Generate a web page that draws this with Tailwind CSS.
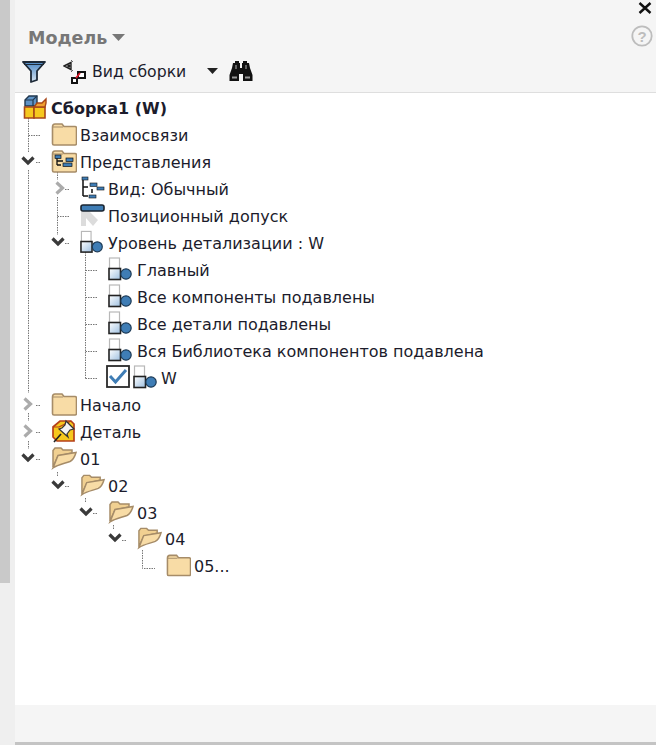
<!DOCTYPE html>
<html lang="ru">
<head>
<meta charset="UTF-8">
<title>Модель</title>
<script src="https://cdn.jsdelivr.net/npm/@tailwindcss/browser@4"></script>
</head>
<body class="bg-[#efefef] font-['DejaVu_Sans','Noto_Sans',sans-serif] text-[16px] text-[#1c1c2c]">

<!-- icon symbols -->
<svg class="absolute w-0 h-0">
  <defs>
    <linearGradient id="lod" x1="0" y1="0" x2="1" y2="1"><stop offset="0" stop-color="#ffffff"/><stop offset="1" stop-color="#9dbfe0"/></linearGradient>
    <linearGradient id="fun" x1="0" y1="0" x2="0" y2="1"><stop offset="0" stop-color="#4d88c4"/><stop offset="1" stop-color="#d5e4f2"/></linearGradient>
    <symbol id="folder" viewBox="0 0 26 24">
      <path d="M1.5 5V21.5Q1.5 23 3 23H24Q25.5 23 25.5 21.5V6Q25.5 4.5 24 4.5H13L11 2H4Q1.5 2 1.5 5Z" fill="#f8dca6" stroke="#a68c68" stroke-width="1.6"/>
      <path d="M2 5H12" stroke="#a68c68" stroke-width="1"/>
    </symbol>
    <symbol id="folder-open" viewBox="0 0 26 24">
      <path d="M2 21V4.5L4 2H10L12 4H21V7L7 10Z" fill="#f1d091" stroke="#a68c68" stroke-width="1.5"/>
      <path d="M2 22L7 9.5L25 6.5C24 10 22 14 19 15.5C14 17.5 7 18.5 2 22Z" fill="#f8dca6" stroke="#a68c68" stroke-width="1.5"/>
    </symbol>
    <symbol id="lod-icon" viewBox="0 0 26 24">
      <rect x="1.5" y="1" width="10" height="11" fill="#fff" stroke="#b8b8b8" stroke-width="1.2"/>
      <rect x="1" y="11.5" width="11.5" height="11" fill="url(#lod)" stroke="#222" stroke-width="1.6"/>
      <circle cx="18" cy="17" r="5.2" fill="#3f7db5" stroke="#1d3a55" stroke-width="1.2"/>
    </symbol>
    <symbol id="chev-down" viewBox="0 0 14 10">
      <path d="M1.5 1.5L7 7L12.5 1.5" fill="none" stroke="#3a3a3a" stroke-width="3.2"/>
    </symbol>
    <symbol id="chev-right" viewBox="0 0 10 14">
      <path d="M1.5 1.5L7.5 7L1.5 12.5" fill="none" stroke="#ababab" stroke-width="3.2"/>
    </symbol>
  </defs>
</svg>

<div class="flex h-[745px]">
  <!-- left strip -->
  <div class="w-[15px] shrink-0">
    <div class="w-[10px] h-[583px] bg-[#c9c9c9]"></div>
  </div>

  <div class="flex-1 flex flex-col bg-[#f5f5f5]">
    <!-- panel head -->
    <div class="relative h-[93px] shrink-0 border-b border-[#dedede]">
      <svg class="absolute right-[4px] top-[2px] w-[14px] h-[12px]" viewBox="0 0 14 12"><path d="M1.5 1L12.5 11M12.5 1L1.5 11" stroke="#111" stroke-width="2.4"/></svg>
      <div class="flex justify-between pt-[23px] pl-[13px] pr-[3px] h-[57px]">
        <div class="flex items-center h-[28px] gap-[5px]">
          <span class="text-[17.5px] font-bold text-[#777777] pt-[2px]">Модель</span>
          <svg class="w-[13px] h-[7px]" viewBox="0 0 13 7"><path d="M0 0H13L6.5 7Z" fill="#777777"/></svg>
        </div>
        <svg class="w-[22px] h-[22px] mt-[2px]" viewBox="0 0 22 22">
          <circle cx="11" cy="11" r="9.7" fill="none" stroke="#bdbdbd" stroke-width="1.8"/>
          <text x="11" y="16.5" text-anchor="middle" font-size="15" font-weight="700" fill="#bdbdbd" font-family="Liberation Sans">?</text>
        </svg>
      </div>
      <div class="flex items-center h-[28px] pl-[7px]">
        <svg class="w-[24px] h-[23px]" viewBox="0 0 24 23">
          <path d="M1 2H23L15 11V20L9 22V11Z" fill="url(#fun)" stroke="#1e2a38" stroke-width="1.8" stroke-linejoin="round"/>
          <path d="M2 4.5H22" stroke="#1e2a38" stroke-width="1"/>
        </svg>
        <svg class="w-[24px] h-[25px] ml-[17px]" viewBox="0 0 24 25">
          <path d="M1 7L8 3.5V10.5Z" fill="none" stroke="#222" stroke-width="1.4"/>
          <circle cx="6" cy="7" r="1.8" fill="#222"/>
          <path d="M8 1L10 3M8 13L10 11" stroke="#666" stroke-width="1"/>
          <rect x="15" y="13" width="7" height="6" fill="#fff" stroke="#111" stroke-width="2"/>
          <rect x="9" y="19" width="5" height="5" fill="#fff" stroke="#111" stroke-width="2"/>
          <path d="M13 19L17 14" stroke="#e0182a" stroke-width="1.8"/>
        </svg>
        <span class="ml-[5px] text-[15.7px] pt-[2px]">Вид сборки</span>
        <svg class="w-[11px] h-[6px] ml-[21px]" viewBox="0 0 11 6"><path d="M0 0H11L5.5 6Z" fill="#222"/></svg>
        <svg class="w-[24px] h-[22px] ml-[11px]" viewBox="0 0 24 22">
          <path d="M4 3H6V1H10V3H11V8H13V3H14V1H18V3H20L21 8L23.5 15V21H14V14H10V21H.5V15L3 8Z" fill="#111"/>
          <path d="M7 5V9M17 5V9" stroke="#999" stroke-width="1.2"/>
          <path d="M3 17.5H8M16 17.5H21" stroke="#999" stroke-width="2"/>
        </svg>
      </div>
    </div>

    <!-- tree -->
    <div class="relative h-[612px] bg-white pt-[1px]">
      <!-- dotted guide lines, coordinates are relative to the tree box (15,93) -->
      <svg class="absolute left-0 top-0 w-[300px] h-[500px]" viewBox="15 93 300 500" fill="none" stroke="#777777" stroke-width="1" stroke-dasharray="1.5 1">
        <path d="M28.5 118V152M28.5 135.5H41M36 162.5H41M28.5 170V393M36 405.5H41M28.5 413V421M36 432.5H41M28.5 441V449M36 459.5H41"/>
        <path d="M57.5 172V180M65 189.5H70M57.5 197V235M57.5 216.5H70M65 243.5H70"/>
        <path d="M85.5 252V378.5M85.5 270.5H98M85.5 297.5H98M85.5 324.5H98M85.5 351.5H98M85.5 378.5H98"/>
        <path d="M57.5 472V477M65 486.5H70M85.5 498V503M93 513.5H98M113.5 525V530M122 540.5H127M142.5 550V568.5H155"/>
      </svg>

      <div class="relative">
        <!-- root -->
        <div class="flex items-center h-[26.95px] pl-[8px]">
          <svg class="w-[25px] h-[24px]" viewBox="0 0 25 24">
            <path d="M2 5L6 1H14V11H2Z" fill="#5f93c6" stroke="#22384f" stroke-width="1.4"/>
            <path d="M2 5H10L14 1M10 5V11" fill="none" stroke="#22384f" stroke-width="1.2"/>
            <path d="M1.5 12H11V23H1.5Z" fill="#f6c81e" stroke="#a8471a" stroke-width="1.6"/>
            <path d="M11 12H22V23H11Z" fill="#f6c81e" stroke="#a8471a" stroke-width="1.6"/>
            <path d="M14 8H19L23 4V8L22 12H11Z" fill="#f0a030" stroke="#a8471a" stroke-width="1.4"/>
          </svg>
          <span class="ml-[3px] pt-[4px] font-bold">Сборка1 (W)</span>
        </div>
        <div class="flex items-center h-[26.95px]">
          <div class="w-[36px]"></div>
          <svg class="w-[26px] h-[24px]"><use href="#folder"/></svg>
          <span class="ml-[3px] pt-[4px]">Взаимосвязи</span>
        </div>
        <div class="flex items-center h-[26.95px]">
          <div class="w-[36px] flex justify-end pr-[16px]"><svg class="w-[14px] h-[10px]"><use href="#chev-down"/></svg></div>
          <svg class="w-[26px] h-[24px]" viewBox="0 0 26 24">
            <use href="#folder" width="26" height="24"/>
            <path d="M6 8V16M6 12H12M6 16H10" stroke="#111" stroke-width="1.3" fill="none"/>
            <rect x="4" y="6" width="6" height="3.5" fill="#3f7db5" stroke="#111" stroke-width=".7"/>
            <rect x="12" y="14" width="9" height="3.5" fill="#3f7db5" stroke="#111" stroke-width=".7"/>
            <rect x="15" y="9" width="7" height="3.5" fill="#3f7db5" stroke="#111" stroke-width=".7"/>
          </svg>
          <span class="ml-[3px] pt-[4px]">Представления</span>
        </div>
        <div class="flex items-center h-[26.95px]">
          <div class="w-[65px] flex justify-end pr-[15px]"><svg class="w-[10px] h-[14px]"><use href="#chev-right"/></svg></div>
          <svg class="w-[25px] h-[24px]" viewBox="0 0 25 24">
            <path d="M3 3V20M3 3H8M3 11H8M3 20H8M12 13V17" fill="none" stroke="#111" stroke-width="1.5"/>
            <rect x="2" y="1" width="6" height="3" fill="#3f7db5" stroke="#111" stroke-width=".6"/>
            <rect x="10" y="7" width="7" height="3.5" fill="#3f7db5" stroke="#111" stroke-width=".6"/>
            <rect x="17" y="11" width="7" height="3" fill="#3f7db5" stroke="#111" stroke-width=".6"/>
            <rect x="9" y="19" width="7" height="3" fill="#3f7db5" stroke="#111" stroke-width=".6"/>
          </svg>
          <span class="ml-[3px] pt-[4px]">Вид: Обычный</span>
        </div>
        <div class="flex items-center h-[26.95px]">
          <div class="w-[65px]"></div>
          <svg class="w-[25px] h-[24px]" viewBox="0 0 25 24">
            <path d="M1 8H9L18 17L13 23L6 15V23H1Z" fill="#dcdcdc"/>
            <rect x="1" y="2" width="23" height="6" rx="2" fill="#3f7db5" stroke="#1a2430" stroke-width="1.6"/>
          </svg>
          <span class="ml-[3px] pt-[4px]">Позиционный допуск</span>
        </div>
        <div class="flex items-center h-[26.95px]">
          <div class="w-[65px] flex justify-end pr-[15px]"><svg class="w-[14px] h-[10px]"><use href="#chev-down"/></svg></div>
          <svg class="w-[25px] h-[24px]"><use href="#lod-icon"/></svg>
          <span class="ml-[3px] pt-[4px]">Уровень детализации : W</span>
        </div>
        <div class="flex items-center h-[26.95px]">
          <div class="w-[93px]"></div>
          <svg class="w-[26px] h-[24px]"><use href="#lod-icon"/></svg>
          <span class="ml-[3px] pt-[4px]">Главный</span>
        </div>
        <div class="flex items-center h-[26.95px]">
          <div class="w-[93px]"></div>
          <svg class="w-[26px] h-[24px]"><use href="#lod-icon"/></svg>
          <span class="ml-[3px] pt-[4px]">Все компоненты подавлены</span>
        </div>
        <div class="flex items-center h-[26.95px]">
          <div class="w-[93px]"></div>
          <svg class="w-[26px] h-[24px]"><use href="#lod-icon"/></svg>
          <span class="ml-[3px] pt-[4px]">Все детали подавлены</span>
        </div>
        <div class="flex items-center h-[26.95px]">
          <div class="w-[93px]"></div>
          <svg class="w-[26px] h-[24px]"><use href="#lod-icon"/></svg>
          <span class="ml-[3px] pt-[4px]">Вся Библиотека компонентов подавлена</span>
        </div>
        <div class="flex items-center h-[26.95px]">
          <div class="w-[91px]"></div>
          <svg class="w-[24px] h-[23px]" viewBox="0 0 24 23">
            <rect x="1" y="1" width="22" height="21" fill="#fff" stroke="#2a2a2a" stroke-width="1.8"/>
            <path d="M4 11L9.5 17L20 5" fill="none" stroke="#3f7db5" stroke-width="3"/>
          </svg>
          <svg class="w-[26px] h-[24px] ml-[3px]"><use href="#lod-icon"/></svg>
          <span class="ml-[2px] pt-[4px]">W</span>
        </div>
        <div class="flex items-center h-[26.95px]">
          <div class="w-[36px] flex justify-end pr-[18px]"><svg class="w-[10px] h-[14px]"><use href="#chev-right"/></svg></div>
          <svg class="w-[26px] h-[24px]"><use href="#folder"/></svg>
          <span class="ml-[3px] pt-[4px]">Начало</span>
        </div>
        <div class="flex items-center h-[26.95px]">
          <div class="w-[36px] flex justify-end pr-[18px]"><svg class="w-[10px] h-[14px]"><use href="#chev-right"/></svg></div>
          <svg class="w-[26px] h-[24px]" viewBox="0 0 26 24">
            <path d="M2 8L9 2H20L23 5V22H6L2 18Z" fill="#f6c81e" stroke="#b5401a" stroke-width="1.7"/>
            <path d="M2 8H8L20 2" fill="none" stroke="#b5401a" stroke-width="1.2"/>
            <path d="M3 23L10 15" stroke="#222" stroke-width="1.6"/>
            <path d="M15 2L23 10L19 11L16 15L17 18L8 10L11 9L14 6Z" fill="#f4f4f4" stroke="#333" stroke-width="1.2"/>
          </svg>
          <span class="ml-[3px] pt-[4px]">Деталь</span>
        </div>
        <div class="flex items-center h-[26.95px]">
          <div class="w-[36px] flex justify-end pr-[16px]"><svg class="w-[14px] h-[10px]"><use href="#chev-down"/></svg></div>
          <svg class="w-[26px] h-[24px]"><use href="#folder-open"/></svg>
          <span class="ml-[3px] pt-[4px]">01</span>
        </div>
        <div class="flex items-center h-[26.95px]">
          <div class="w-[65px] flex justify-end pr-[15px]"><svg class="w-[14px] h-[10px]"><use href="#chev-down"/></svg></div>
          <svg class="w-[25px] h-[24px]"><use href="#folder-open"/></svg>
          <span class="ml-[3px] pt-[4px]">02</span>
        </div>
        <div class="flex items-center h-[26.95px]">
          <div class="w-[93px] flex justify-end pr-[15px]"><svg class="w-[14px] h-[10px]"><use href="#chev-down"/></svg></div>
          <svg class="w-[26px] h-[24px]"><use href="#folder-open"/></svg>
          <span class="ml-[3px] pt-[4px]">03</span>
        </div>
        <div class="flex items-center h-[26.95px]">
          <div class="w-[122px] flex justify-end pr-[15px]"><svg class="w-[14px] h-[10px]"><use href="#chev-down"/></svg></div>
          <svg class="w-[25px] h-[24px]"><use href="#folder-open"/></svg>
          <span class="ml-[3px] pt-[4px]">04</span>
        </div>
        <div class="flex items-center h-[26.95px]">
          <div class="w-[151px]"></div>
          <svg class="w-[25px] h-[24px]"><use href="#folder"/></svg>
          <span class="ml-[3px] pt-[4px]">05...</span>
        </div>
      </div>
    </div>

    <!-- footer -->
    <div class="h-[37px] shrink-0"></div>
    <div class="h-[3px] shrink-0 bg-[#c4c4c4]"></div>
  </div>
</div>
</body>
</html>
